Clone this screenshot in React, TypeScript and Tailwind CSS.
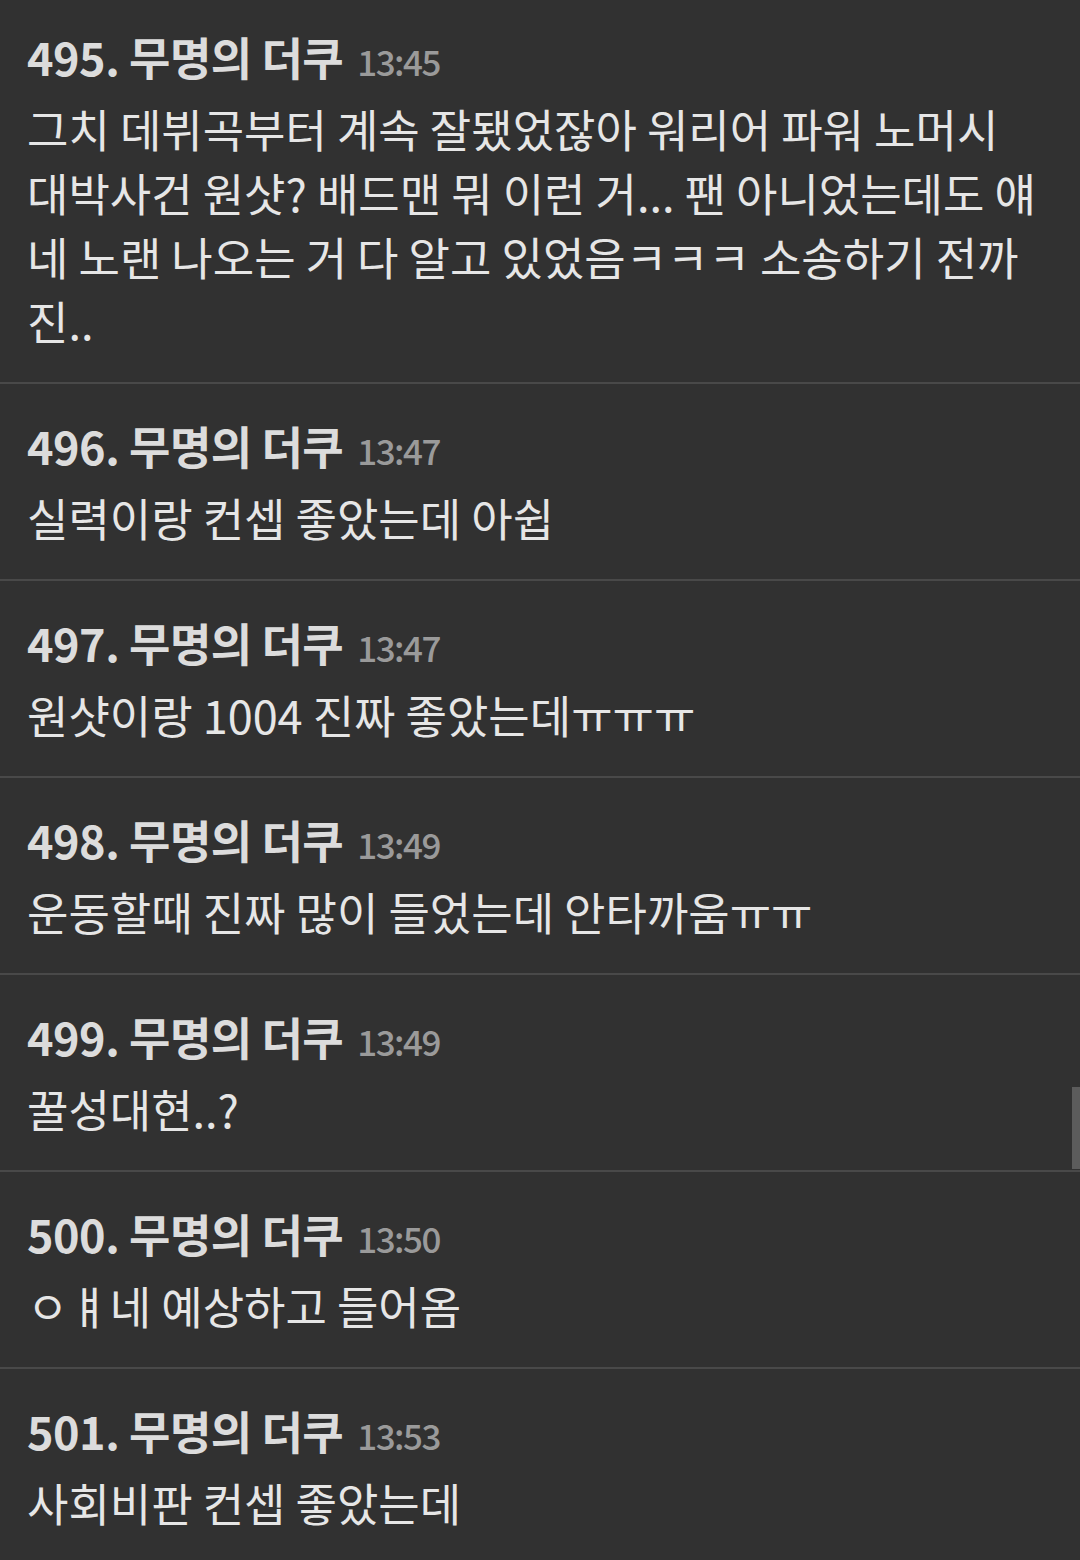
const posts = [
  {
    no: 495,
    time: '13:45',
    lines: [
      '그치 데뷔곡부터 계속 잘됐었잖아 워리어 파워 노머시',
      '대박사건 원샷? 배드맨 뭐 이런 거... 팬 아니었는데도 얘',
      '네 노랜 나오는 거 다 알고 있었음ㅋㅋㅋ 소송하기 전까',
      '진..',
    ],
  },
  { no: 496, time: '13:47', lines: ['실력이랑 컨셉 좋았는데 아쉽'] },
  { no: 497, time: '13:47', lines: ['원샷이랑 1004 진짜 좋았는데ㅠㅠㅠ'] },
  { no: 498, time: '13:49', lines: ['운동할때 진짜 많이 들었는데 안타까움ㅠㅠ'] },
  { no: 499, time: '13:49', lines: ['꿀성대현..?'] },
  { no: 500, time: '13:50', lines: ['ㅇㅒ네 예상하고 들어옴'] },
  { no: 501, time: '13:53', lines: ['사회비판 컨셉 좋았는데'] },
]

export default function App() {
  return (
    <div
      className="relative min-h-[1560px] w-full overflow-hidden bg-[#313131] text-[#e4e4e4]"
      style={{ fontFamily: '"Noto Sans CJK KR", "Noto Sans", sans-serif' }}
    >
      {posts.map((p, i) => (
        <div
          key={p.no}
          className={`px-[27px] pb-[29px] ${i === 0 ? 'pt-[33px]' : 'pt-[38px]'} ${
            i < posts.length - 1 ? 'border-b-2 border-[#494949]' : ''
          }`}
        >
          <div className="flex items-baseline h-[48px] leading-[48px] whitespace-nowrap">
            <span className="text-[45px] font-bold tracking-[-0.5px] text-[#dcdcdc]">
              {p.no}. 무명의 더쿠
            </span>
            <span className="ml-[14px] text-[35px] font-medium tracking-[-1.5px] text-[#9a9a9a]">
              {p.time}
            </span>
          </div>
          <div className="mt-[16px] text-[45px] leading-[64px] text-[#e6e6e6]">
            {p.lines.map((l, j) => (
              <div key={j} className="whitespace-nowrap">
                {l}
              </div>
            ))}
          </div>
        </div>
      ))}

      {/* scroll thumb */}
      <div className="absolute right-0 top-[1087px] h-[82px] w-[8px] bg-[#5c5c5c]" />
    </div>
  )
}
